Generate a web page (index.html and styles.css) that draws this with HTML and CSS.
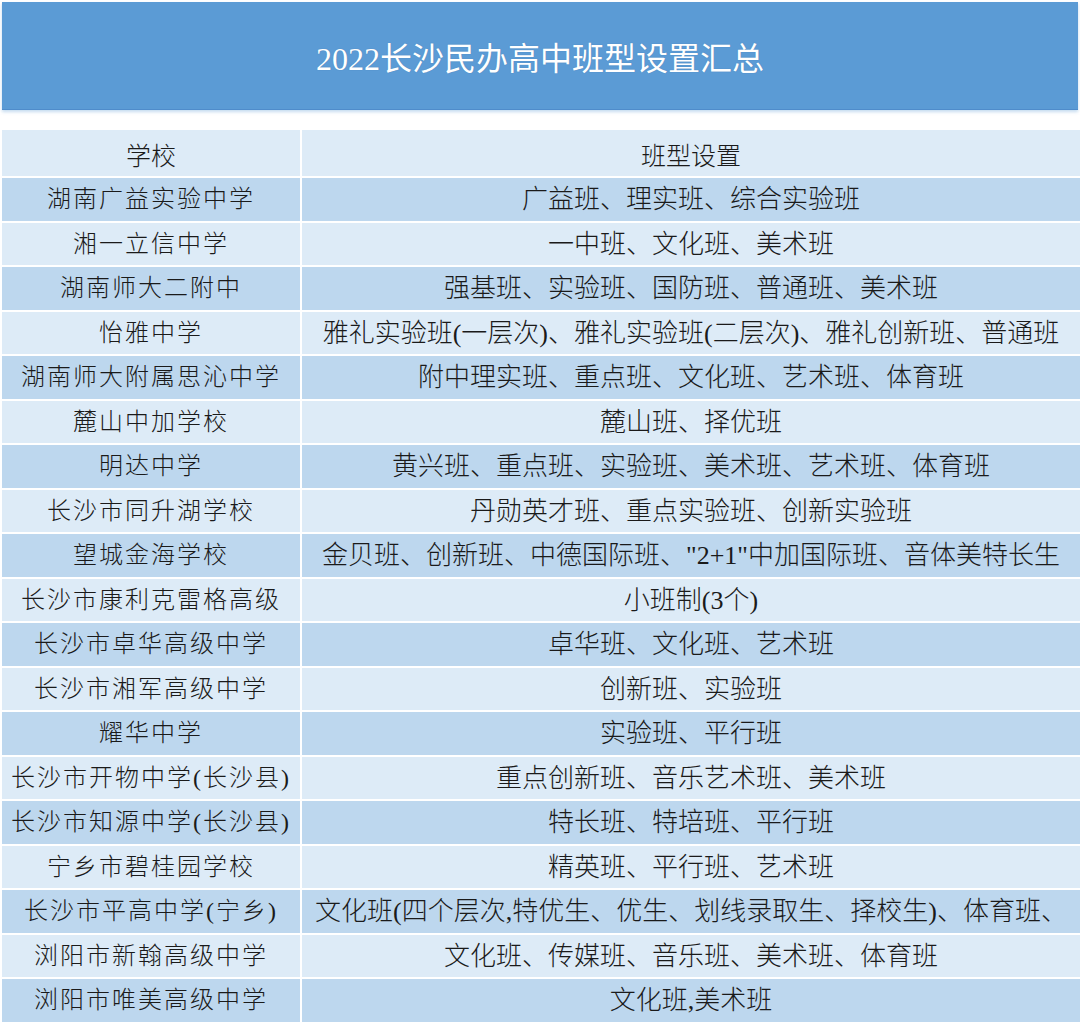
FILE: index.html
```html
<!DOCTYPE html>
<html lang="zh-CN">
<head>
<meta charset="utf-8">
<title>2022长沙民办高中班型设置汇总</title>
<link rel="stylesheet" href="styles.css">
</head>
<body>
<div class="banner"><h1 class="title">2022长沙民办高中班型设置汇总</h1></div>
<div class="table">
  <div class="cell head">学校</div><div class="cell head">班型设置</div>
  <div class="cell school dark">湖南广益实验中学</div><div class="cell cls dark">广益班、理实班、综合实验班</div>
  <div class="cell school">湘一立信中学</div><div class="cell cls">一中班、文化班、美术班</div>
  <div class="cell school dark">湖南师大二附中</div><div class="cell cls dark">强基班、实验班、国防班、普通班、美术班</div>
  <div class="cell school">怡雅中学</div><div class="cell cls">雅礼实验班(一层次)、雅礼实验班(二层次)、雅礼创新班、普通班</div>
  <div class="cell school dark">湖南师大附属思沁中学</div><div class="cell cls dark">附中理实班、重点班、文化班、艺术班、体育班</div>
  <div class="cell school">麓山中加学校</div><div class="cell cls">麓山班、择优班</div>
  <div class="cell school dark">明达中学</div><div class="cell cls dark">黄兴班、重点班、实验班、美术班、艺术班、体育班</div>
  <div class="cell school">长沙市同升湖学校</div><div class="cell cls">丹勋英才班、重点实验班、创新实验班</div>
  <div class="cell school dark">望城金海学校</div><div class="cell cls dark">金贝班、创新班、中德国际班、"2+1"中加国际班、音体美特长生</div>
  <div class="cell school">长沙市康利克雷格高级</div><div class="cell cls">小班制(3个)</div>
  <div class="cell school dark">长沙市卓华高级中学</div><div class="cell cls dark">卓华班、文化班、艺术班</div>
  <div class="cell school">长沙市湘军高级中学</div><div class="cell cls">创新班、实验班</div>
  <div class="cell school dark">耀华中学</div><div class="cell cls dark">实验班、平行班</div>
  <div class="cell school">长沙市开物中学(长沙县)</div><div class="cell cls">重点创新班、音乐艺术班、美术班</div>
  <div class="cell school dark">长沙市知源中学(长沙县)</div><div class="cell cls dark">特长班、特培班、平行班</div>
  <div class="cell school">宁乡市碧桂园学校</div><div class="cell cls">精英班、平行班、艺术班</div>
  <div class="cell school dark">长沙市平高中学(宁乡)</div><div class="cell cls dark">文化班(四个层次,特优生、优生、划线录取生、择校生)、体育班、</div>
  <div class="cell school">浏阳市新翰高级中学</div><div class="cell cls">文化班、传媒班、音乐班、美术班、体育班</div>
  <div class="cell school dark">浏阳市唯美高级中学</div><div class="cell cls dark">文化班,美术班</div>
</div>
</body>
</html>
```

FILE: styles.css
```css
html, body {
  margin: 0;
  padding: 0;
  background: #ffffff;
}
body {
  width: 1080px;
  height: 1031px;
  overflow: hidden;
  font-family: "Liberation Serif", "Noto Sans CJK SC", serif;
  color: #1a1a1a;
}
.banner {
  margin: 2px 2px 0 2px;
  height: 107px;
  background: #5b9bd5;
  border-bottom: 1px solid #4f8ccb;
  box-shadow: 0 2px 3px rgba(91, 155, 213, 0.35);
  display: flex;
  align-items: center;
  justify-content: center;
}
.title {
  margin: 0;
  font-size: 32px;
  font-weight: 400;
  color: #ffffff;
  letter-spacing: 0;
  text-shadow: 0 0 1px rgba(40, 80, 130, 0.4);
}
.table {
  margin: 20px 0 0 2px;
  display: grid;
  grid-template-columns: 298px 1fr;
  grid-template-rows: 46px;
  grid-auto-rows: 42.5px;
  gap: 2px;
}
.cell {
  background: #ddebf7;
  display: flex;
  align-items: center;
  justify-content: center;
  white-space: nowrap;
  overflow: hidden;
  font-size: 26px;
  font-weight: 300;
  line-height: 1;
}
.cell.dark {
  background: #bdd7ee;
}
.head {
  padding-top: 6px;
  font-size: 25px;
}
.school {
  font-size: 24px;
  letter-spacing: 2px;
}
.cls {
  font-size: 26px;
  letter-spacing: 0;
  padding-top: 2px;
}
```
